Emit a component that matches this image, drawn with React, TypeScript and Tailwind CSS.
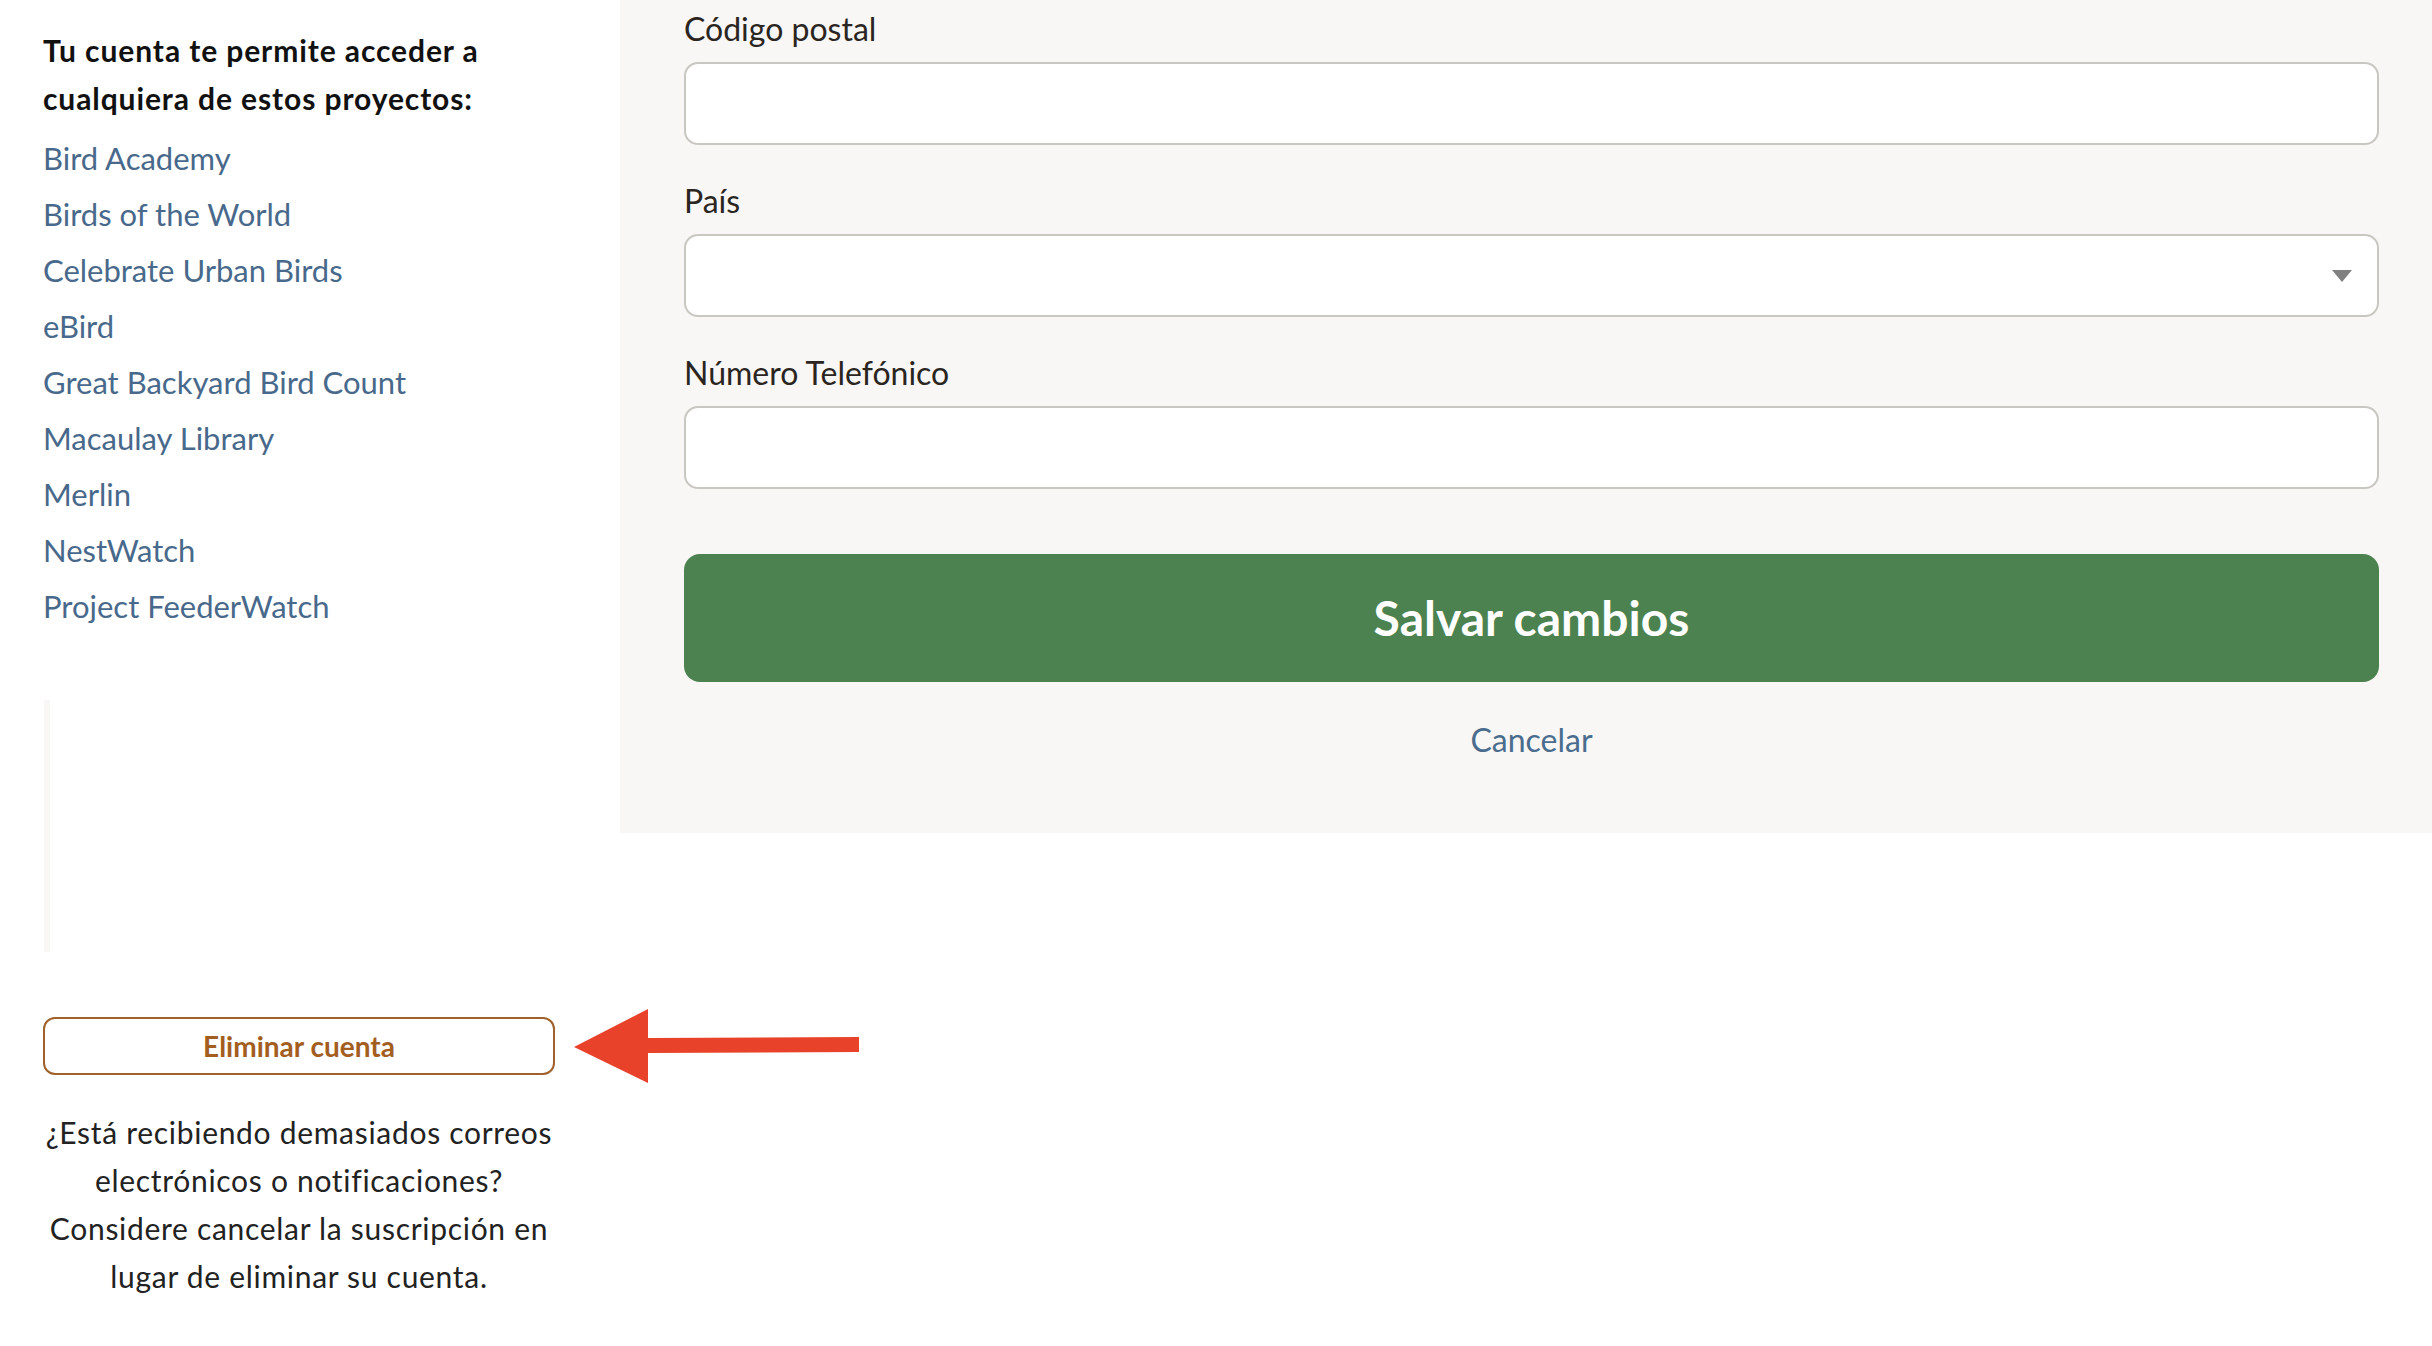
import React from 'react';

const projects = [
  'Bird Academy',
  'Birds of the World',
  'Celebrate Urban Birds',
  'eBird',
  'Great Backyard Bird Count',
  'Macaulay Library',
  'Merlin',
  'NestWatch',
  'Project FeederWatch',
];

const Field: React.FC<{ label: string; children: React.ReactNode }> = ({ label, children }) => (
  <div>
    <label className="mb-[13px] block text-[32px] leading-[40px] text-[#2a2521]">{label}</label>
    {children}
  </div>
);

const inputClass =
  'block h-[83px] w-full rounded-[14px] border-2 border-[#c9c7c1] bg-white px-5 text-[28px] text-[#2a2521] outline-none';

export default function App() {
  return (
    <div className="min-h-screen bg-white font-['Lato','Open_Sans',sans-serif]">
      <div className="flex items-start">
        {/* left column */}
        <aside className="w-[620px] shrink-0 pl-[43px] pt-[26px]">
          <h2 className="w-[512px] text-[30px] font-bold leading-[48px] tracking-[0.9px] text-[#111]">
            Tu cuenta te permite acceder a cualquiera de estos proyectos:
          </h2>
          <ul className="mt-2">
            {projects.map((p) => (
              <li key={p} className="text-[31px] leading-[56px]">
                <a href="#" className="text-[#48698b] hover:underline">
                  {p}
                </a>
              </li>
            ))}
          </ul>

          <div className="ml-px mt-[66px] h-[252px] w-[6px] bg-[#f8f7f5]" />

          <div className="mt-[57px] flex w-max items-center gap-[19px]">
            <button className="h-[58px] w-[512px] rounded-[12px] border-2 border-[#a0612a] bg-white text-[28px] font-bold text-[#a35e1f]">
              Eliminar cuenta
            </button>
            <svg width="285" height="74" viewBox="0 0 285 74">
              <polygon points="0,38 74,0 74,29 285,28 285,43 74,44 74,74" fill="#e8432a" />
            </svg>
          </div>

          <p className="mt-[25px] w-[512px] text-center text-[30px] leading-[48px] tracking-[0.7px] text-[#222]">
            ¿Está recibiendo demasiados correos
            <br />
            electrónicos o notificaciones?
            <br />
            Considere cancelar la suscripción en
            <br />
            lugar de eliminar su cuenta.
          </p>
        </aside>

        {/* form panel */}
        <main className="flex-1 bg-[#f8f7f5] pb-[73px] pl-16 pr-[53px] pt-[9px]">
          <div className="flex flex-col gap-[36px]">
            <Field label="Código postal">
              <input type="text" className={inputClass} />
            </Field>
            <Field label="País">
              <div className="relative">
                <select className={inputClass + ' appearance-none'} defaultValue="">
                  <option value=""></option>
                </select>
                <svg
                  className="pointer-events-none absolute right-[27px] top-1/2 -translate-y-1/2"
                  width="20"
                  height="12"
                  viewBox="0 0 20 12"
                >
                  <polygon points="0,0 20,0 10,12" fill="#808080" />
                </svg>
              </div>
            </Field>
            <Field label="Número Telefónico">
              <input type="tel" className={inputClass} />
            </Field>
          </div>

          <button className="mt-[65px] h-[128px] w-full rounded-[16px] bg-[#4c8150] text-[48px] font-bold text-white">
            Salvar cambios
          </button>
          <div className="mt-[38px] text-center text-[32px] leading-[40px]">
            <a href="#" className="text-[#4a6d8e] hover:underline">
              Cancelar
            </a>
          </div>
        </main>
      </div>
    </div>
  );
}
